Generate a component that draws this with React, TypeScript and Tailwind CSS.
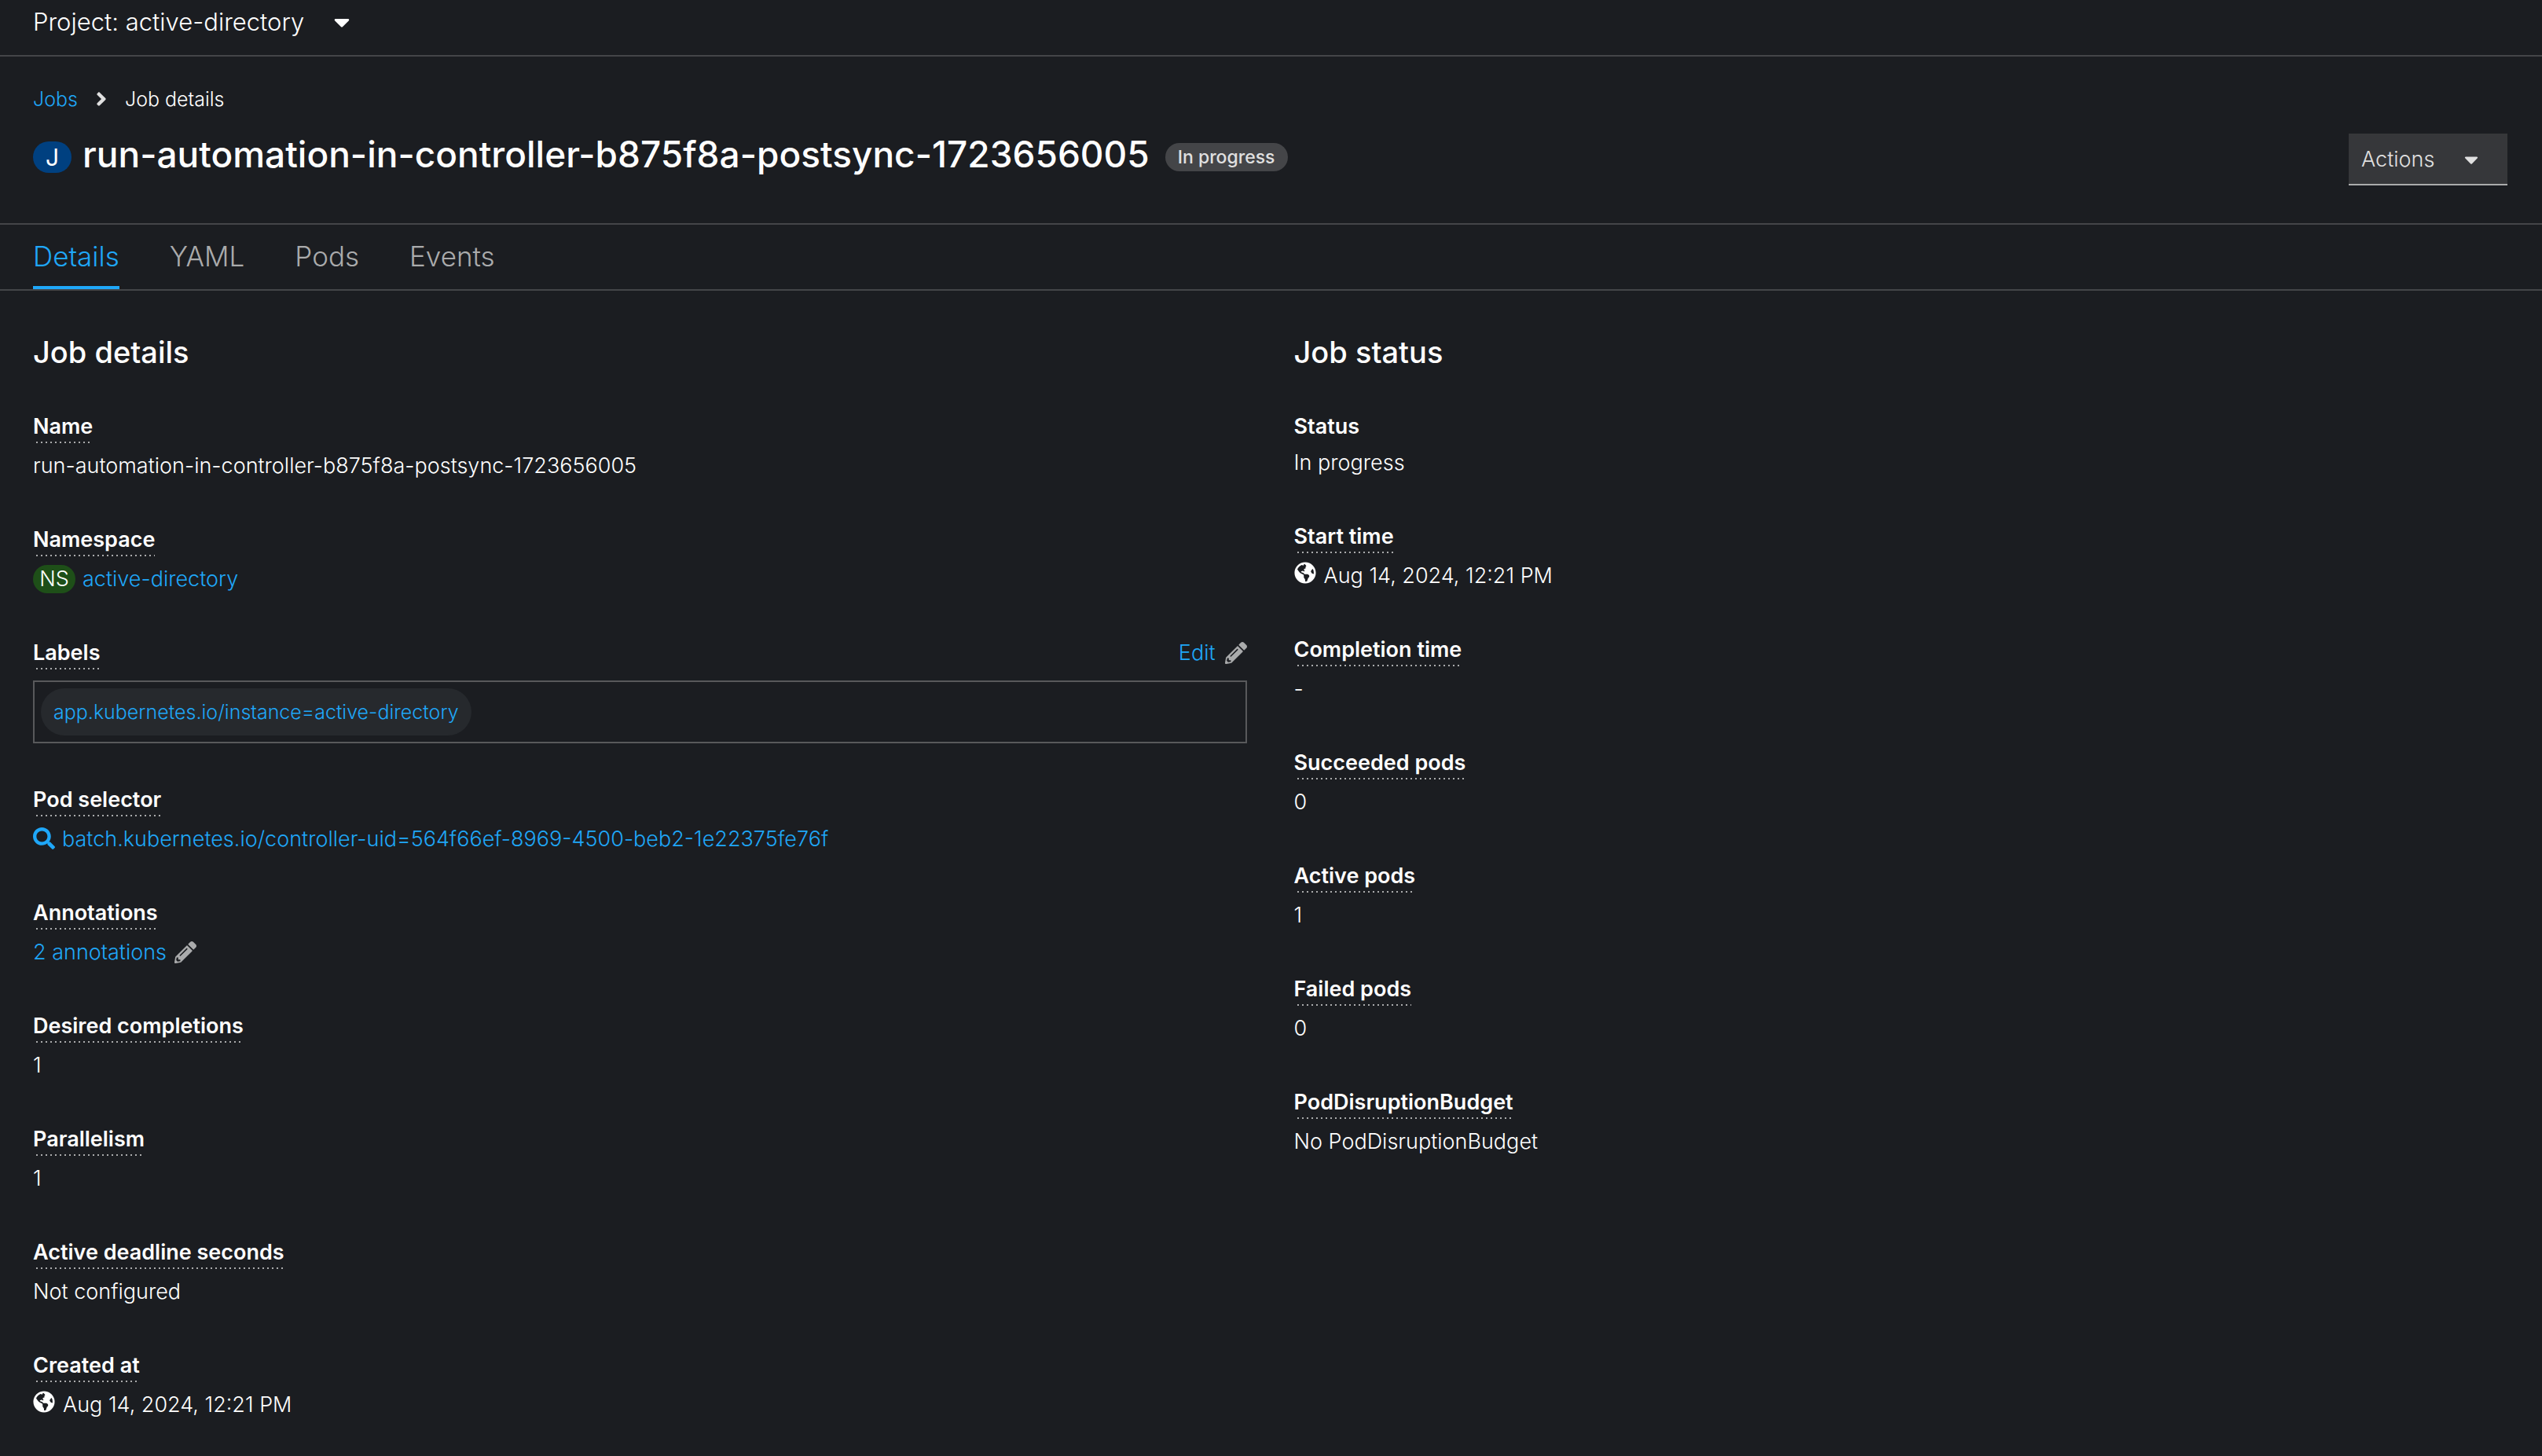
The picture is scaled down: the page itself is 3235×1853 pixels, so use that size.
import type { ReactNode } from "react";
import { FaAngleRight, FaCaretDown, FaGlobeAmericas, FaPencilAlt, FaSearch } from "react-icons/fa";

const JOB_NAME = "run-automation-in-controller-b875f8a-postsync-1723656005";

function Term({ children, plain }: { children: string; plain?: boolean }) {
  if (plain) {
    return <span className="h-[46px] font-semibold">{children}</span>;
  }
  return (
    <span className="flex h-[50px] items-start">
      <button
        type="button"
        className="cursor-pointer bg-[linear-gradient(to_right,transparent_4px,#aaabac_4px)] bg-[length:6px_2px] bg-bottom-left bg-repeat-x font-semibold"
      >
        {children}
      </button>
    </span>
  );
}

function Field({ label, plain, children }: { label: string; plain?: boolean; children: ReactNode }) {
  return (
    <div className="mb-[52px]">
      <dt className="flex">
        <Term plain={plain}>{label}</Term>
      </dt>
      <dd className="flex items-center">{children}</dd>
    </div>
  );
}

function Link({ children, className = "" }: { children: ReactNode; className?: string }) {
  return (
    <a href="#" className={`text-[#1fa7f8] ${className}`}>
      {children}
    </a>
  );
}

function Timestamp({ children }: { children: string }) {
  return (
    <>
      <FaGlobeAmericas className="mr-[10px] mb-2 size-[28px]" />
      <time>{children}</time>
    </>
  );
}

const TABS = ["Details", "YAML", "Pods", "Events"];

export default function App() {
  return (
    <div className="min-h-screen bg-[#1b1d21] font-['Inter',sans-serif] text-[27px] leading-[42px] font-light text-white">
      <div className="flex border-b-2 border-[#444548] px-[42px] pt-1 pb-[18px]">
        <button type="button" className="flex items-center gap-[32px] text-[31px] leading-[48px]">
          Project: active-directory
          <FaCaretDown className="size-[32px]" />
        </button>
      </div>

      <header className="border-b-2 border-[#444548] px-[42px] pt-[34px] pb-[48px]">
        <nav aria-label="Breadcrumb" className="flex items-center text-[25px] leading-[40px]">
          <Link>Jobs</Link>
          <FaAngleRight className="mx-[16px] size-[28px] text-[#e0e0e0]" />
          <span>Job details</span>
        </nav>
        <div className="mt-[18px] flex items-start justify-between">
          <h1 className="flex items-center text-[46px] leading-[64px] font-medium">
            <span className="mt-2 mr-[14px] flex h-[40px] w-[49px] items-center justify-center rounded-full bg-[#004080] text-[30px] font-normal">
              J
            </span>
            {JOB_NAME}
            <span className="mt-2 ml-[20px] rounded-full bg-[#444548] px-4 text-[23px] leading-[36px] font-medium text-[#e0e0e0]">
              In progress
            </span>
          </h1>
          <button
            type="button"
            className="mt-[6px] mr-[2px] flex w-[202px] items-center justify-between border-b-2 border-[#aaabac] bg-[#36373a] pt-[12px] pb-[10px] pr-[32px] pl-4 text-[#e0e0e0]"
          >
            Actions
            <FaCaretDown className="size-[28px]" />
          </button>
        </div>
      </header>

      <div role="tablist" className="flex gap-[64px] border-b-2 border-[#444548] px-[42px] text-[35px] leading-[54px]">
        {TABS.map((tab, i) => (
          <button
            key={tab}
            type="button"
            role="tab"
            aria-selected={i === 0}
            className={
              i === 0
                ? "border-b-4 border-[#1fa7f8] pt-[13px] pb-[11px] text-[#1fa7f8]"
                : "border-b-4 border-transparent pt-[13px] pb-[11px] text-[#aaabac]"
            }
          >
            {tab}
          </button>
        ))}
      </div>

      <main className="grid grid-cols-2 gap-[60px] pr-[44px] pl-[42px] pt-[48px]">
        <section>
          <h2 className="mb-[44px] text-[38px] leading-[60px] font-medium">Job details</h2>
          <dl>
            <Field label="Name">{JOB_NAME}</Field>
            <Field label="Namespace">
              <span className="mr-[9px] flex h-[36px] w-[54px] items-center justify-center rounded-full bg-[#1e4f18]">
                NS
              </span>
              <Link>active-directory</Link>
            </Field>
            <div className="mb-[51px]">
              <dt className="flex justify-between">
                <Term>Labels</Term>
                <button type="button" className="flex h-[42px] items-center gap-[12px] text-[#1fa7f8]">
                  Edit
                  <FaPencilAlt className="size-[28px] text-[#aaabac]" />
                </button>
              </dt>
              <dd className="mt-[6px] flex border-2 border-[#58595b] p-2">
                <Link className="rounded-full bg-[#26292d] px-4 py-[9px] text-[25px] leading-[42px]">
                  app.kubernetes.io/instance=active-directory
                </Link>
              </dd>
            </div>
            <Field label="Pod selector">
              <Link className="flex items-center gap-[9px]">
                <FaSearch className="mb-[2px] size-[28px]" />
                batch.kubernetes.io/controller-uid=564f66ef-8969-4500-beb2-1e22375fe76f
              </Link>
            </Field>
            <Field label="Annotations">
              <button type="button" className="flex items-center gap-[10px] text-[#1fa7f8]">
                2 annotations
                <FaPencilAlt className="size-[28px] text-[#aaabac]" />
              </button>
            </Field>
            <Field label="Desired completions">1</Field>
            <Field label="Parallelism">1</Field>
            <Field label="Active deadline seconds">Not configured</Field>
            <Field label="Created at">
              <Timestamp>Aug 14, 2024, 12:21 PM</Timestamp>
            </Field>
          </dl>
        </section>

        <section>
          <h2 className="mb-[44px] text-[38px] leading-[60px] font-medium">Job status</h2>
          <dl>
            <Field label="Status" plain>
              In progress
            </Field>
            <Field label="Start time">
              <Timestamp>Aug 14, 2024, 12:21 PM</Timestamp>
            </Field>
            <Field label="Completion time">-</Field>
            <Field label="Succeeded pods">0</Field>
            <Field label="Active pods">1</Field>
            <Field label="Failed pods">0</Field>
            <Field label="PodDisruptionBudget">No PodDisruptionBudget</Field>
          </dl>
        </section>
      </main>
    </div>
  );
}
